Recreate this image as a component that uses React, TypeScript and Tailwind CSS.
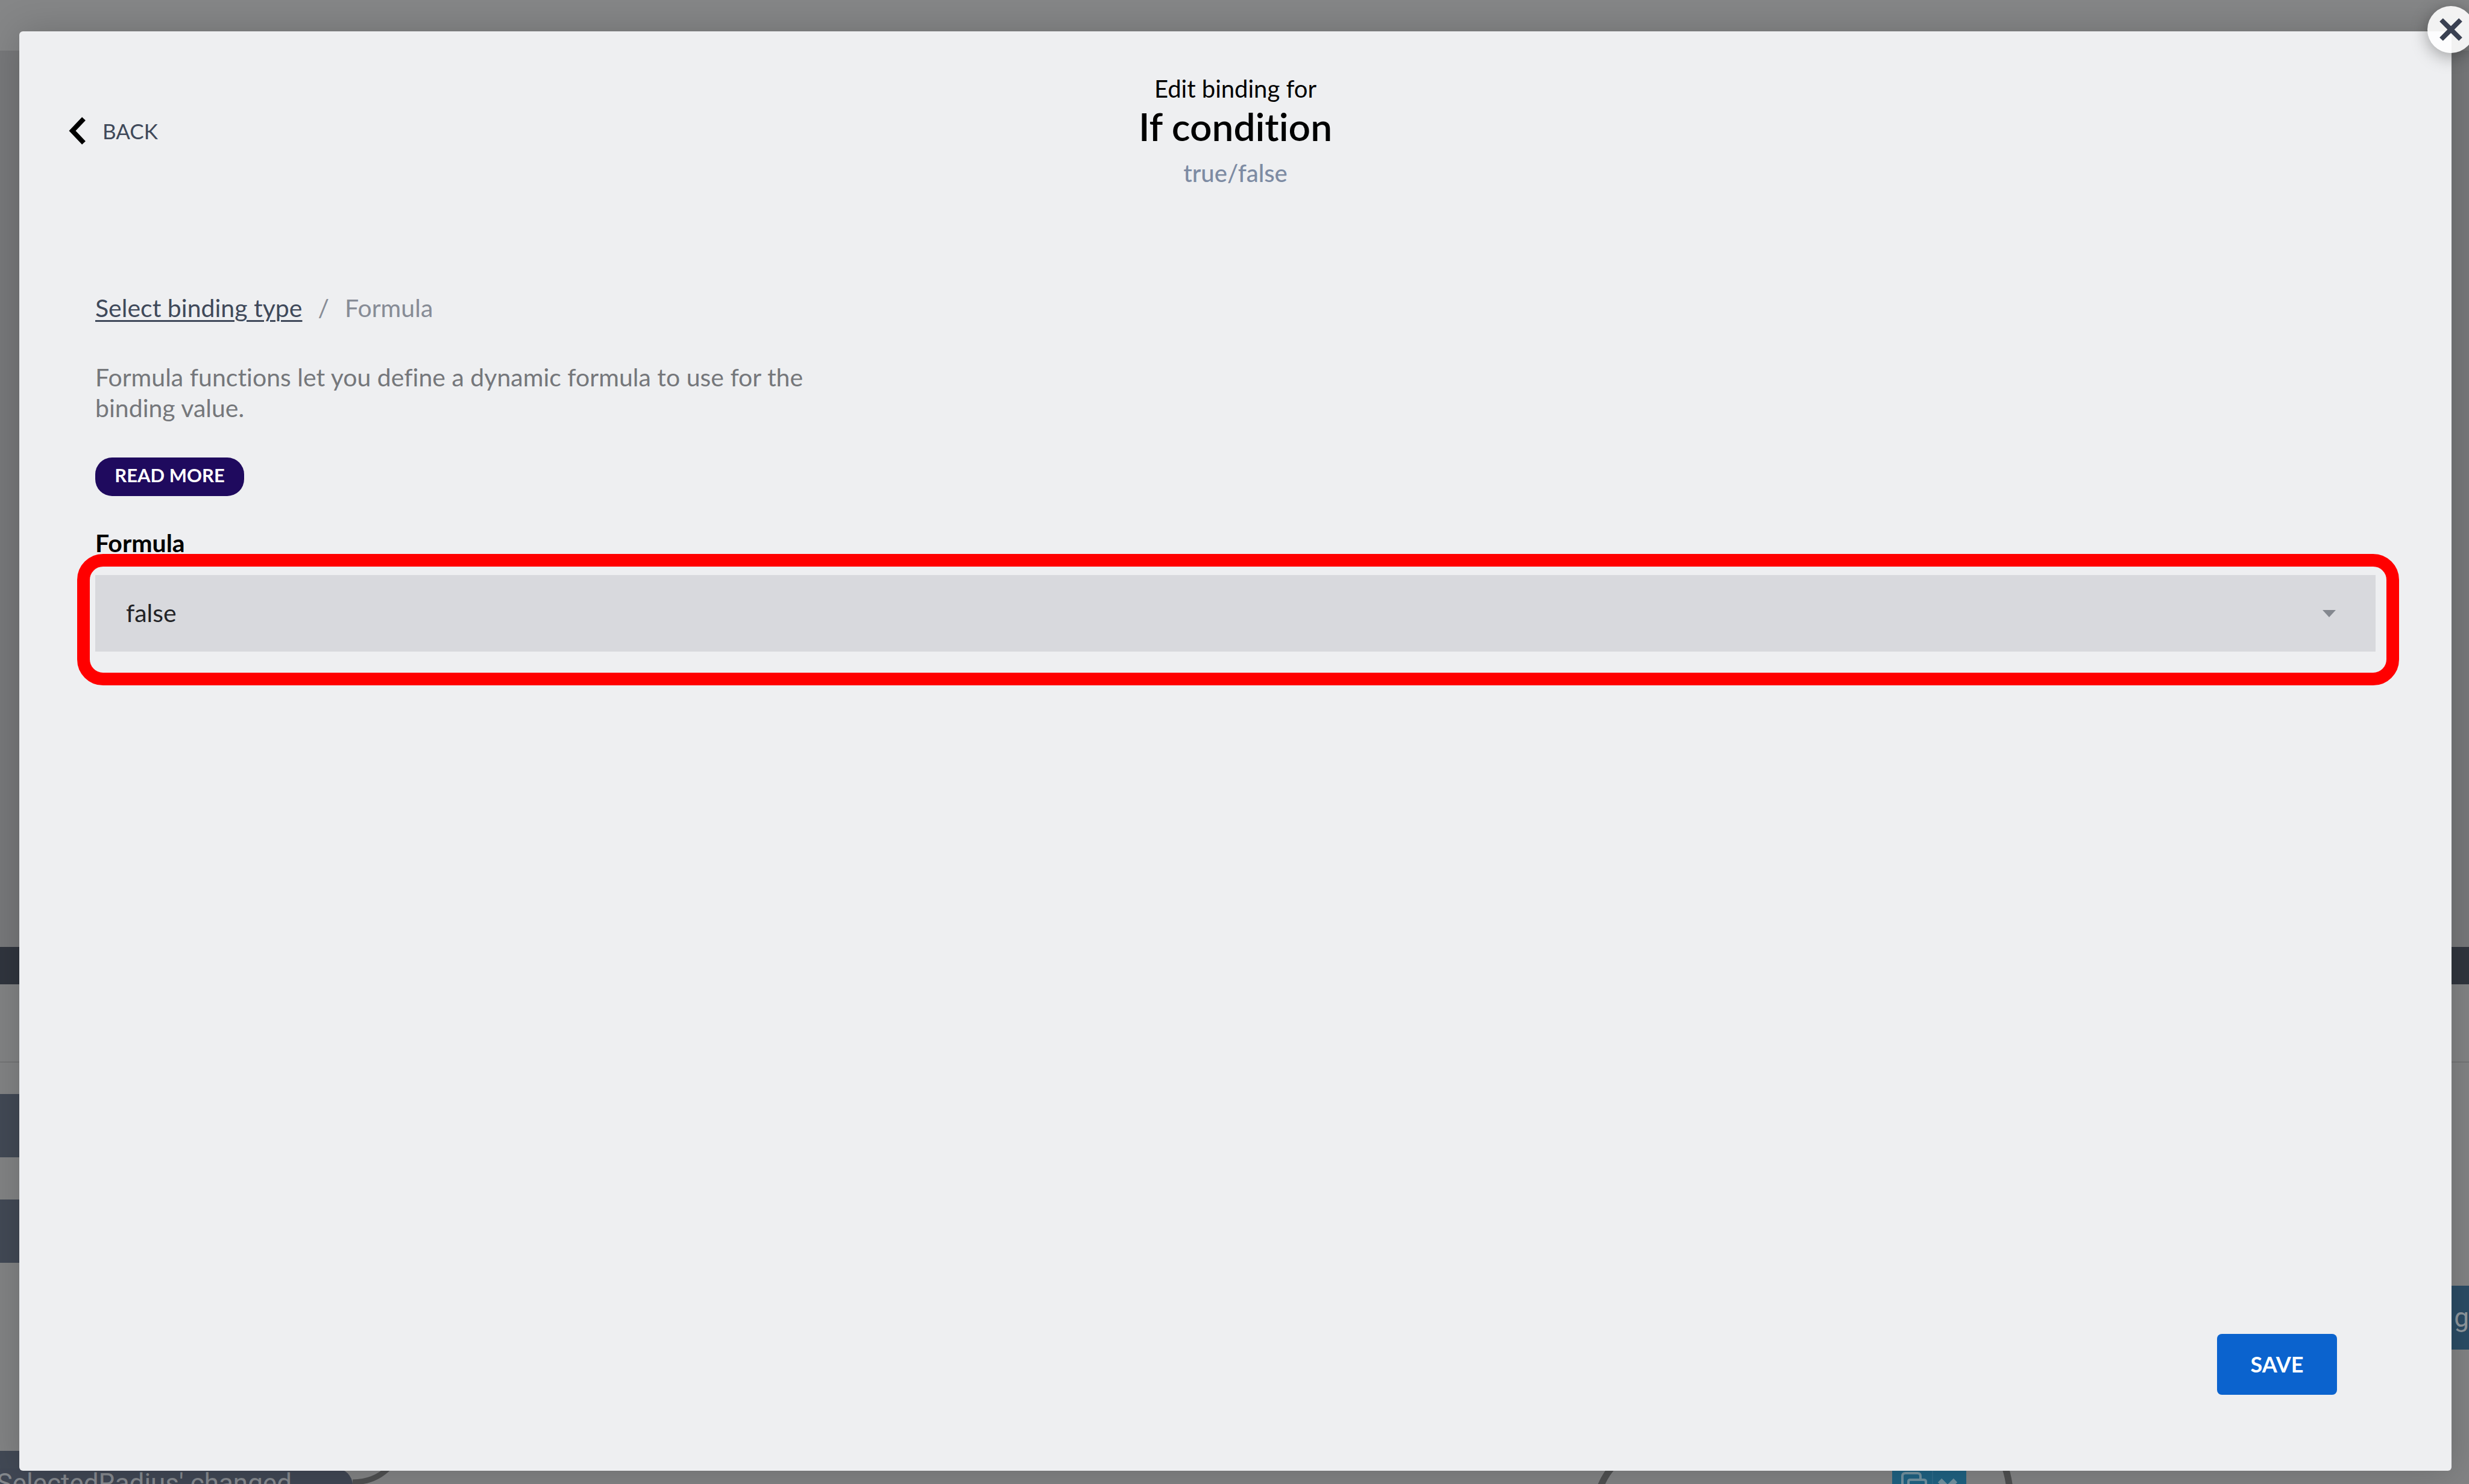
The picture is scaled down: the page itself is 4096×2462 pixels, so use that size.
import React from "react";

function CanvasBackdrop() {
  return (
    <div aria-hidden="true" className="absolute inset-0 flex flex-col overflow-hidden bg-[#808182] font-['Roboto',sans-serif] text-[44px] leading-[50px]">
      <div className="h-[84px] bg-[#858687]" />
      <div className="h-[1487px] bg-[#77787a]" />
      <div className="h-[62px] bg-[#30353e]" />
      <div className="relative flex-1 bg-[#828384]">
        <div className="absolute inset-x-0 top-[128px] h-[2px] bg-[#747576]" />
        <div className="absolute left-0 top-[182px] h-[105px] w-[300px] bg-[#424955]" />
        <div className="absolute left-0 top-[357px] h-[105px] w-[300px] bg-[#424955]" />
        <div className="absolute right-0 top-[500px] flex h-[106px] w-[300px] items-center justify-end bg-[#2b4c65] text-[#8f979d]">
          g
        </div>
        <div className="absolute left-0 top-[774px] h-[60px] w-[300px] bg-[#424955]" />
        <div className="absolute -left-10 top-[803px] flex w-[625px] justify-end rounded-[28px] bg-[#404754] pb-7 pr-[101px] text-[#85898e]">
          SelectedRadius' changed
        </div>
        <svg className="absolute left-[585px] top-[796px]" width="70" height="40" viewBox="0 0 70 40" fill="none">
          <path d="M0 30C22 30 42 24 60 6" stroke="#4f5051" strokeWidth="9" />
        </svg>
        <svg className="absolute left-[2640px] top-[796px]" width="720" height="40" viewBox="0 0 720 40" fill="none">
          <path d="M39 0C30 10 22 20 14 40" stroke="#4f5051" strokeWidth="11" />
          <path d="M684 0C690 12 692 24 694 40" stroke="#4f5051" strokeWidth="11" />
          <rect x="499" y="0" width="123" height="40" fill="#1f6282" />
          <path d="M566 0V40" stroke="#3a7290" strokeWidth="1" />
          <path d="M516 40V20q0-5 5-5h20q5 0 5 5v5" stroke="#71919f" strokeWidth="4" />
          <path d="M526 40V29q0-3 3-3h22q4 0 4 3v11" stroke="#71919f" strokeWidth="4" />
          <path d="M578 27l13 13 13-13" stroke="#71919f" strokeWidth="9" />
        </svg>
      </div>
    </div>
  );
}

function CloseButton() {
  return (
    <button
      type="button"
      aria-label="Close"
      className="absolute -right-[38px] -top-[42px] flex size-[78px] items-center justify-center rounded-full bg-white/90 shadow-[0_6px_28px_rgba(0,0,0,0.35)]"
    >
      <svg width="40" height="40" viewBox="0 0 40 40" fill="none" stroke="#3a4152" strokeWidth="8">
        <path d="M4 4L36 36M36 4L4 36" />
      </svg>
    </button>
  );
}

export default function App() {
  return (
    <div className="relative flex min-h-screen flex-col overflow-hidden pb-[22px] pl-8 pr-[29px] pt-[52px] font-['Lato',sans-serif] text-[41px] leading-[50px] [font-variant-ligatures:none]">
      <CanvasBackdrop />
      <main
        role="dialog"
        aria-labelledby="dialog-title"
        className="relative flex flex-1 flex-col rounded-md bg-[#eeeff1] px-[126px] pb-[126px] pt-[70px] shadow-[0_0_60px_rgba(0,0,0,0.18)]"
      >
        <CloseButton />

        <header className="-mx-[44px] grid grid-cols-[1fr_auto_1fr] items-start">
          <button type="button" className="mt-[70px] flex items-center gap-[28px] justify-self-start text-[35px] leading-[50px] text-[#3f495a]">
            <svg width="28" height="46" viewBox="0 0 28 46" fill="none" stroke="#000" strokeWidth="8">
              <path d="M25 3L6 23L25 43" />
            </svg>
            BACK
          </button>
          <div className="text-center text-[40px]">
            <p className="text-black">Edit binding for</p>
            <h1 id="dialog-title" className="text-[64px] font-semibold leading-[76px] text-black">
              If condition
            </h1>
            <p className="mt-[14px] font-medium text-[#7d8ba3]">true/false</p>
          </div>
        </header>

        <nav aria-label="Breadcrumb" className="mt-[174px] flex gap-[26px] text-[#878c96]">
          <a href="#binding-type" className="text-[#3f495a] underline decoration-[3px] underline-offset-[5px]">
            Select binding type
          </a>
          <span>/</span>
          <span>Formula</span>
        </nav>

        <p className="mt-16 max-w-[1220px] leading-[51px] text-[#75777b]">
          Formula functions let you define a dynamic formula to use for the binding value.
        </p>

        <a
          href="#read-more"
          className="mt-[57px] flex h-16 w-[247px] items-center justify-center self-start rounded-[28px] bg-[#1f0a5e] pb-1.5 text-[31px] font-bold leading-[36px] text-white"
        >
          READ MORE
        </a>

        <label htmlFor="formula" className="mt-[53px] self-start font-bold text-black">
          Formula
        </label>
        <div className="relative mt-[28px]">
          <select
            id="formula"
            defaultValue="false"
            className="block h-[127px] w-full appearance-none rounded-none bg-[#d8d9dd] px-[51px] pb-0.5 text-[#222326]"
          >
            <option value="false">false</option>
            <option value="true">true</option>
          </select>
          <svg className="pointer-events-none absolute right-[66px] top-[58px]" width="22" height="12" viewBox="0 0 22 12">
            <path d="M0 0H22L11 12Z" fill="#84888f" />
          </svg>
          <div className="pointer-events-none absolute -bottom-[56px] -left-[30px] -right-[39px] -top-[35px] rounded-[43px] border-[21px] border-[#ff0000]" />
        </div>

        <footer className="mt-auto flex justify-end pr-16">
          <button type="button" className="h-[101px] w-[199px] rounded-lg bg-[#0b63ce] pb-0.5 text-[36px] font-bold text-white">
            SAVE
          </button>
        </footer>
      </main>
    </div>
  );
}
